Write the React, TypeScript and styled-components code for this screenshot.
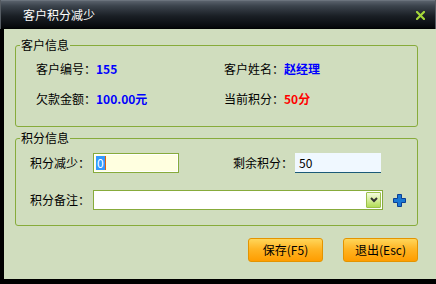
import React from "react";
import styled, { createGlobalStyle } from "styled-components";

const Global = createGlobalStyle`
  html, body { margin: 0; padding: 0; background: #000; }
  body { font-family: "Noto Sans CJK SC", "Noto Sans", sans-serif; font-size: 12px; }
`;

const Window = styled.div`
  width: 436px;
  height: 284px;
  background: #000;
  display: flex;
  flex-direction: column;
  box-sizing: border-box;
`;

const TitleBar = styled.div`
  height: 29px;
  flex: none;
  box-sizing: border-box;
  display: flex;
  align-items: center;
  justify-content: space-between;
  padding: 1px 10px 0 22px;
  background: linear-gradient(#7d858e 0px, #59616b 1px, #3b434c 6px, #1a1f25 16px, #07090c 27px, #000 29px);
  border-left: 1px solid #555b62;
  border-right: 1px solid #555b62;
  color: #fff;
  font-size: 12px;
  line-height: 14px;
`;

const CloseIcon = () => (
  <svg width="9" height="9" viewBox="0 0 9 9">
    <path d="M1 1 L8 8 M8 1 L1 8" stroke="#a6d83a" strokeWidth="2.2" strokeLinecap="square" />
  </svg>
);

const Body = styled.div`
  flex: 1;
  margin: 0 0 5px 4px;
  background: #d0ddbe;
  padding: 9px 18px 0 11px;
  display: flex;
  flex-direction: column;
`;

const Group = styled.fieldset<{ $mt?: number }>`
  margin: ${(p) => p.$mt ?? 0}px 0 0 0;
  padding: 0;
  border: 1px solid #87ab3b;
  border-radius: 3px;
  min-width: 0;
`;

const GroupInner = styled.div<{ $pad: string }>`
  padding: ${(p) => p.$pad};
`;

const Legend = styled.legend`
  padding: 0 1px;
  margin-left: 4px;
  font-size: 12px;
  line-height: 14px;
  color: #000;
`;

const InfoGrid = styled.div`
  display: grid;
  grid-template-columns: 188px auto;
  row-gap: 16px;
  line-height: 14px;
`;

const Pair = styled.div`
  display: flex;
  align-items: center;
  white-space: nowrap;
`;

const Label = styled.span<{ $w?: number }>`
  color: #000;
  width: ${(p) => p.$w ?? 60}px;
  flex: none;
`;

const Value = styled.span<{ $red?: boolean }>`
  color: ${(p) => (p.$red ? "#ff0000" : "#0000ff")};
  font-weight: bold;
`;

const FormRow = styled.div<{ $mt?: number }>`
  display: flex;
  align-items: center;
  height: 20px;
  margin-top: ${(p) => p.$mt ?? 0}px;
  line-height: 14px;
`;

const Field = styled.div<{ $ml?: number }>`
  display: flex;
  align-items: center;
  margin-left: ${(p) => p.$ml ?? 0}px;
`;

const YellowInput = styled.div`
  width: 86px;
  height: 20px;
  box-sizing: border-box;
  margin-left: 3px;
  border: 1px solid #87ab3b;
  box-shadow: inset 0 0 0 1px #ffffff;
  background: #ffffe0;
  display: flex;
  align-items: center;
  padding-left: 2px;
`;

const Selected = styled.span`
  background: #3399ff;
  color: #fff;
  line-height: 14px;
  padding: 0 1px;
  border-right: 1px solid #e0600a;
`;

const BlueInput = styled.div`
  width: 86px;
  height: 20px;
  box-sizing: border-box;
  margin-left: 2px;
  background: #f0f8ff;
  border-bottom: 1px solid #1b5a78;
  display: flex;
  align-items: center;
  padding-left: 4px;
  color: #000;
`;

const Select = styled.div`
  width: 290px;
  height: 20px;
  box-sizing: border-box;
  margin-left: 3px;
  background: #fff;
  border: 1px solid #87ab3b;
  display: flex;
  justify-content: flex-end;
  align-items: center;
  padding-right: 1px;
`;

const DropButton = styled.div`
  width: 15px;
  height: 16px;
  box-sizing: border-box;
  border: 1px solid #9cc04c;
  border-radius: 1px;
  background: linear-gradient(#f4fbe0, #d6ee9a 50%, #b2dc58);
  display: flex;
  align-items: center;
  justify-content: center;
`;

const Chevron = () => (
  <svg width="8" height="6" viewBox="0 0 8 6">
    <path d="M1 1 L4 4 L7 1" stroke="#333" strokeWidth="2" fill="none" />
  </svg>
);

const PlusWrap = styled.div`
  margin-left: 10px;
  display: flex;
`;

const Plus = () => (
  <svg width="13" height="13" viewBox="0 0 13 13">
    <path
      d="M4.5 0.5 H8.5 V4.5 H12.5 V8.5 H8.5 V12.5 H4.5 V8.5 H0.5 V4.5 H4.5 Z"
      fill="#1a78d4"
      stroke="#0a3f96"
      strokeWidth="1"
    />
  </svg>
);

const ButtonRow = styled.div`
  display: flex;
  justify-content: flex-end;
  gap: 20px;
  margin-top: 12px;
`;

const Button = styled.button`
  width: 75px;
  height: 24px;
  box-sizing: border-box;
  border: 1px solid #e39400;
  border-radius: 3px;
  background: linear-gradient(#ffd65a, #ffb524 45%, #ff9d00);
  color: #000;
  font-family: "Noto Sans CJK SC", "Noto Sans", sans-serif;
  font-size: 12px;
  line-height: 14px;
  padding: 0;
  cursor: pointer;
`;

export default function App() {
  return (
    <>
      <Global />
      <Window>
        <TitleBar>
          <span>客户积分减少</span>
          <CloseIcon />
        </TitleBar>
        <Body>
          <Group>
            <Legend>客户信息</Legend>
            <GroupInner $pad="10px 0 20px 20px">
              <InfoGrid>
                <Pair>
                  <Label>客户编号：</Label>
                  <Value>155</Value>
                </Pair>
                <Pair>
                  <Label>客户姓名：</Label>
                  <Value>赵经理</Value>
                </Pair>
                <Pair>
                  <Label>欠款金额：</Label>
                  <Value>100.00元</Value>
                </Pair>
                <Pair>
                  <Label>当前积分：</Label>
                  <Value $red>50分</Value>
                </Pair>
              </InfoGrid>
            </GroupInner>
          </Group>
          <Group $mt={4}>
            <Legend>积分信息</Legend>
            <GroupInner $pad="8px 0 15px 14px">
              <FormRow>
                <Field>
                  <Label>积分减少：</Label>
                  <YellowInput>
                    <Selected>0</Selected>
                  </YellowInput>
                </Field>
                <Field $ml={54}>
                  <Label>剩余积分：</Label>
                  <BlueInput>50</BlueInput>
                </Field>
              </FormRow>
              <FormRow $mt={17}>
                <Field>
                  <Label>积分备注：</Label>
                  <Select>
                    <DropButton>
                      <Chevron />
                    </DropButton>
                  </Select>
                </Field>
                <PlusWrap>
                  <Plus />
                </PlusWrap>
              </FormRow>
            </GroupInner>
          </Group>
          <ButtonRow>
            <Button>保存(F5)</Button>
            <Button>退出(Esc)</Button>
          </ButtonRow>
        </Body>
      </Window>
    </>
  );
}
